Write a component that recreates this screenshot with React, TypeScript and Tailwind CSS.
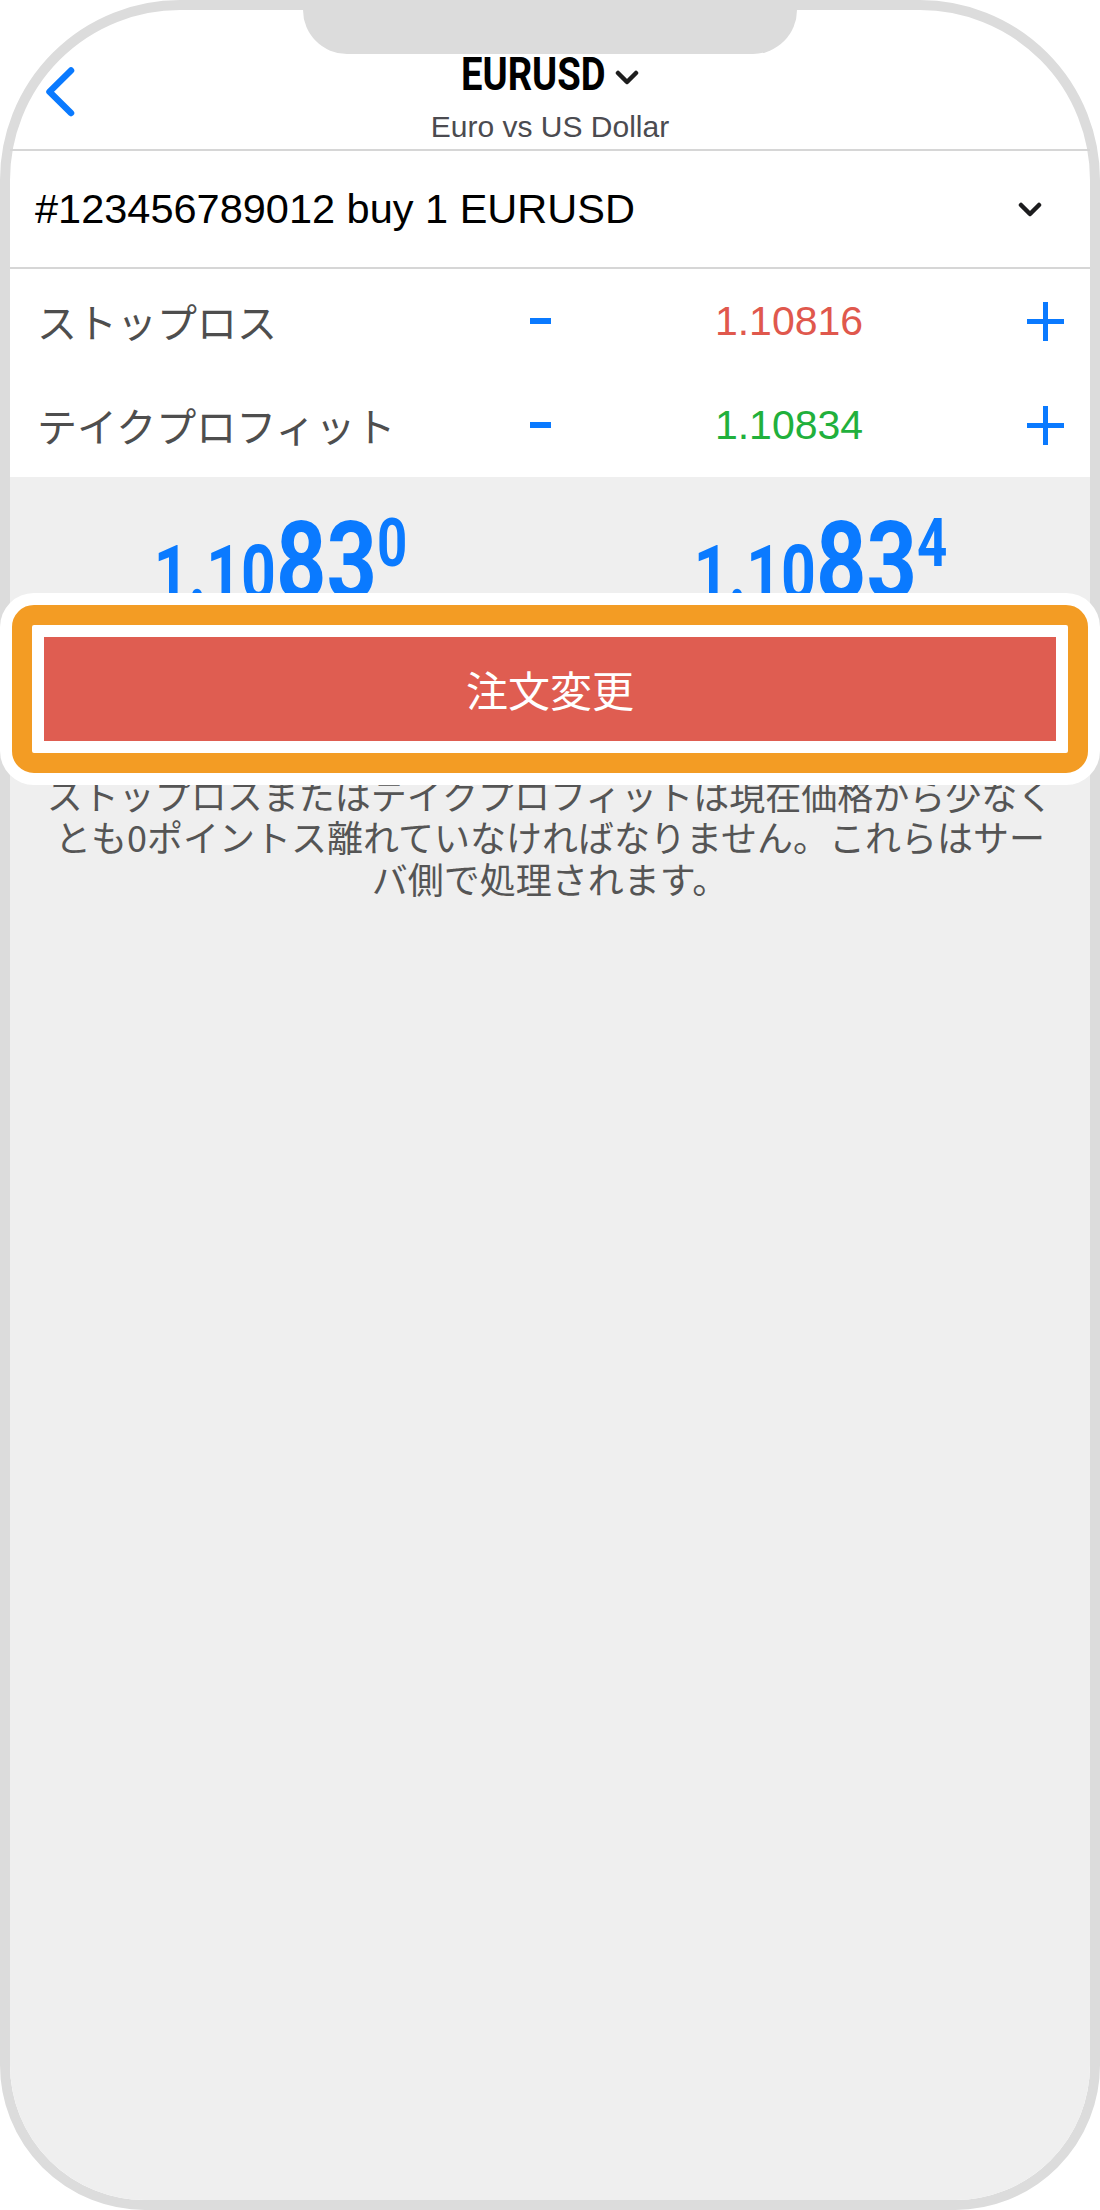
import { type ReactNode } from "react";

const BLUE = "text-[#0a7aff]";

const Chevron = ({ className }: { className?: string }) => (
  <svg width="24" height="15" viewBox="0 0 24 15" className={className}>
    <path d="M3 3 L12 12 L21 3" fill="none" stroke="currentColor" strokeWidth="4.5" strokeLinecap="round" strokeLinejoin="round" />
  </svg>
);

const Plus = () => (
  <svg width="37" height="39" viewBox="0 0 37 39" className={BLUE}>
    <path d="M18.5 0 V39 M0 19.5 H37" stroke="currentColor" strokeWidth="5" />
  </svg>
);

const AdjustRow = ({ label, value, color }: { label: string; value: string; color: string }) => (
  <div className="flex h-[104px] items-center pl-[27px] pr-[26px] last:h-[105px]">
    <span className="w-[493px] font-['Noto_Sans_CJK_JP',sans-serif] text-[40px] leading-none text-[#4e4e4e]">{label}</span>
    <div className="h-[6px] w-[21px] bg-[#0a7aff]" />
    <span className={`flex-1 text-center font-['Liberation_Sans',sans-serif] text-[41px] leading-none ${color}`}>{value}</span>
    <Plus />
  </div>
);

const Price = ({ base, big, sup }: { base: string; big: string; sup: string }) => (
  <div className="flex flex-1 justify-center">
    <div className={`flex scale-x-[0.8] items-baseline font-['Roboto',sans-serif] font-bold leading-none ${BLUE}`}>
      <span className="text-[76px]">{base}</span>
      <span className="text-[110px]">{big}</span>
      <span className="mt-[4px] self-start text-[66px]">{sup}</span>
    </div>
  </div>
);

const Line = ({ children }: { children: ReactNode }) => <span className="block">{children}</span>;

export default function App() {
  return (
    <div className="relative flex h-[2210px] w-[1100px] flex-col rounded-t-[180px] rounded-b-[145px] border-[10px] border-[#dcdcdc] bg-white">
      {/* notch */}
      <div className="absolute left-[293px] top-0 z-20 h-[44px] w-[494px] rounded-b-[44px] bg-[#dcdcdc]" />

      {/* header */}
      <div className="grid h-[141px] shrink-0 grid-cols-[1fr_auto_1fr] border-b-2 border-[#d6d6d6]">
        <div>
          <svg width="29" height="50" viewBox="0 0 29 50" className={`ml-[36px] mt-[57px] ${BLUE}`}>
            <path d="M25 3.5 L3.5 24.75 L25 46" fill="none" stroke="currentColor" strokeWidth="6.5" strokeLinecap="round" strokeLinejoin="round" />
          </svg>
        </div>
        <div className="flex flex-col items-center pt-[41px]">
          <div className="flex items-center">
            <span className="w-[142px]">
              <span className="inline-block origin-left scale-x-[0.83] whitespace-nowrap font-['Roboto',sans-serif] text-[46px] font-bold leading-[46px] text-black">
                EURUSD
              </span>
            </span>
            <Chevron className="ml-[12px] mt-[7px] text-[#1e1e1e]" />
          </div>
          <span className="mt-[12px] font-['Liberation_Sans',sans-serif] text-[30px] leading-[36px] text-[#4b4b50]">Euro vs US Dollar</span>
        </div>
        <div />
      </div>

      {/* order selector */}
      <div className="flex h-[118px] shrink-0 items-center justify-between border-b-2 border-[#d6d6d6] pl-[25px] pr-[48px]">
        <span className="font-['Liberation_Sans',sans-serif] text-[41.5px] leading-[48px] text-black">#123456789012 buy 1 EURUSD</span>
        <Chevron className="text-[#1c1c1e]" />
      </div>

      <AdjustRow label="ストップロス" value="1.10816" color="text-[#e0584d]" />
      <AdjustRow label="テイクプロフィット" value="1.10834" color="text-[#21b03c]" />

      {/* lower panel */}
      <div className="flex flex-1 flex-col rounded-b-[135px] bg-[#efefef] pt-[30px]">
        <div className="flex h-[110px]">
          <Price base="1.10" big="83" sup="0" />
          <Price base="1.10" big="83" sup="4" />
        </div>

        <div className="relative mx-[34px] mt-[20px] h-[104px]">
          <div className="absolute -inset-[44px] z-10 rounded-[34px] bg-white p-[12px]">
            <div className="h-full rounded-[22px] border-[20px] border-[#f39c24] bg-white" />
          </div>
          <button className="relative z-10 flex h-full w-full items-center justify-center bg-[#df5d51] font-['Noto_Sans_CJK_JP',sans-serif] text-[42px] leading-none text-white">
            注文変更
          </button>
        </div>

        <p className="mt-[32px] px-[35px] text-center font-['Noto_Sans_CJK_JP',sans-serif] text-[36px] leading-[42px] text-[#555555]">
          <Line>ストップロスまたはテイクプロフィットは現在価格から少なく</Line>
          <Line>とも0ポイントス離れていなければなりません。これらはサー</Line>
          <Line>バ側で処理されます。</Line>
        </p>
      </div>
    </div>
  );
}
